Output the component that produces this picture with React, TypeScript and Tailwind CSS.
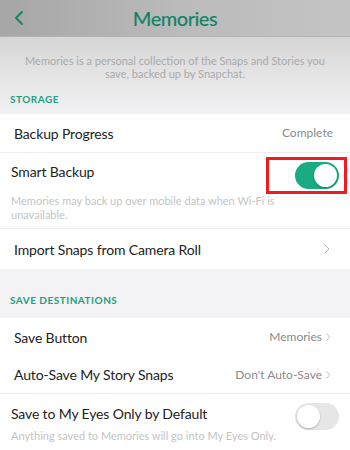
import { ChevronLeft, ChevronRight } from "lucide-react";

const Toggle = ({ on }: { on: boolean }) => (
  <div
    className={`w-[44px] h-[27px] rounded-full p-[2px] flex items-center ${
      on ? "bg-[#19ab82] justify-end" : "bg-[#e6e6e6] justify-start"
    }`}
  >
    <div className="size-[23px] rounded-full bg-white shadow-[0_1px_2px_rgba(0,0,0,0.25)]" />
  </div>
);

export default function App() {
  return (
    <div className="w-[350px] h-[450px] overflow-hidden bg-[#f3f3f5] font-['Lato',sans-serif]">
      <div className="relative h-[37px] flex items-center justify-center bg-gradient-to-r from-[#a6a6a6] via-[#bababa] to-[#c4c4c4] border-b border-[#b4b0b4]">
        <ChevronLeft className="absolute left-[7px] top-[6px] size-[24px] text-[#15866a]" strokeWidth={2} />
        <h1 className="text-[20px] font-medium text-[#0e8466] tracking-tight">Memories</h1>
      </div>
      <div className="bg-gradient-to-b from-[#d6d6d6] to-[#f2f2f4] pt-[17px]">
        <p className="px-[18px] text-center text-[11px] leading-[13px] text-[#a9a9ab]">
          Memories is a personal collection of the Snaps and Stories you save, backed up by Snapchat.
        </p>
        <div className="pt-[11px] pb-[7px] px-[10px] text-[10px] leading-[16px] font-bold tracking-[0.05em] text-[#1c9f7c]">
          STORAGE
        </div>
      </div>
      <div className="bg-white">
        <div className="h-[39px] flex items-center justify-between pl-[14px] pr-[17px] border-b border-[#ececec]">
          <span className="text-[14px] tracking-[-0.01em] text-[#222]">Backup Progress</span>
          <span className="text-[12px] text-[#8a8a8a]">Complete</span>
        </div>
        <div className="relative pl-[11px] pr-[11px] pt-[9px] pb-[6px] border-b border-[#ececec]">
          <div className="text-[14px] tracking-[-0.01em] text-[#222] leading-[20px]">Smart Backup</div>
          <p className="mt-[12px] w-[290px] text-[11px] leading-[14px] text-[#c4c4c4]">
            Memories may back up over mobile data when Wi-Fi is unavailable.
          </p>
          <div className="absolute left-[266px] top-[4px] w-[81px] h-[37px] border-[3px] border-[#ee1c1c] flex items-center justify-end pr-[5px]">
            <Toggle on />
          </div>
        </div>
        <div className="h-[40px] flex items-center justify-between pl-[14px] pr-[15px]">
          <span className="text-[14px] tracking-[-0.01em] text-[#222]">Import Snaps from Camera Roll</span>
          <ChevronRight className="size-[16px] text-[#b4b4b4]" strokeWidth={1.5} />
        </div>
      </div>
      <div className="h-[49px] flex items-end pb-[10px] px-[10px] text-[10px] leading-[16px] font-bold tracking-[0.05em] text-[#1c9f7c]">
        SAVE DESTINATIONS
      </div>
      <div className="bg-white">
        <div className="h-[38px] flex items-center justify-between pl-[14px] pr-[15px]">
          <span className="text-[14px] tracking-[-0.01em] text-[#222]">Save Button</span>
          <span className="flex items-center text-[12px] text-[#8a8a8a]">
            Memories
            <ChevronRight className="size-[14px] -ml-[1px] text-[#b4b4b4]" strokeWidth={1.5} />
          </span>
        </div>
        <div className="h-[38px] flex items-center justify-between pl-[14px] pr-[15px] border-b border-[#ececec]">
          <span className="text-[14px] tracking-[-0.01em] text-[#222]">Auto-Save My Story Snaps</span>
          <span className="flex items-center text-[12px] text-[#8a8a8a]">
            Don't Auto-Save
            <ChevronRight className="size-[14px] -ml-[1px] text-[#b4b4b4]" strokeWidth={1.5} />
          </span>
        </div>
        <div className="relative pl-[11px] pr-[11px] pt-[10px] pb-[10px]">
          <div className="text-[14px] tracking-[-0.01em] text-[#222] leading-[20px]">Save to My Eyes Only by Default</div>
          <p className="mt-[5px] text-[11px] leading-[14px] text-[#c4c4c4]">
            Anything saved to Memories will go into My Eyes Only.
          </p>
          <div className="absolute left-[295px] top-[9px]">
            <Toggle on={false} />
          </div>
        </div>
      </div>
    </div>
  );
}
